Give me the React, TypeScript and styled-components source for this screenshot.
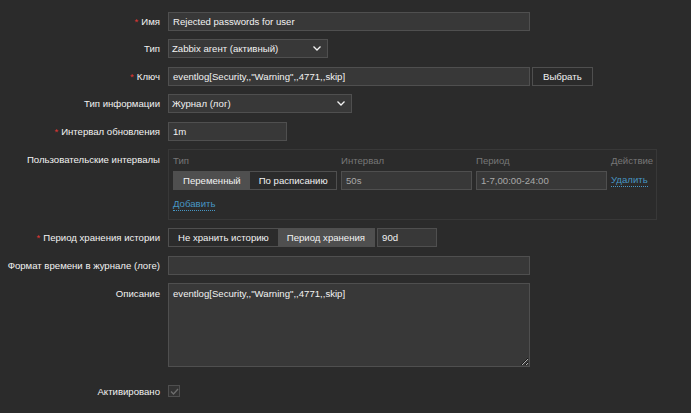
import React from "react"
import styled, { createGlobalStyle } from "styled-components"

const GlobalStyle = createGlobalStyle`
  html, body {
    margin: 0;
    background: #2b2b2b;
  }
  body {
    font-family: "Liberation Sans", Arial, sans-serif;
    font-size: 9.6px;
    color: #f2f2f2;
  }
`

const Form = styled.div`
  display: grid;
  grid-template-columns: 160px 1fr;
  align-content: start;
  column-gap: 8px;
  row-gap: 8.4px;
  padding-top: 12px;
  width: 691px;
  height: 413px;
  box-sizing: border-box;
`

const Label = styled.div<{ $top?: boolean; $mt?: number }>`
  text-align: right;
  line-height: 19px;
  white-space: nowrap;
  align-self: ${(p) => (p.$top ? "start" : "center")};
  padding-top: ${(p) => (p.$top ? "1px" : "0")};
  margin-top: ${(p) => p.$mt || 0}px;
`

const Req = styled.span`
  color: #e33734;
  margin-right: 3px;
`

const Field = styled.div<{ $mt?: number }>`
  display: flex;
  align-items: center;
  gap: 2px;
  min-height: 19px;
  margin-top: ${(p) => p.$mt || 0}px;
`

const Input = styled.div<{ $w: number; $dim?: boolean }>`
  width: ${(p) => p.$w}px;
  height: 19px;
  box-sizing: border-box;
  background: #383838;
  border: 1px solid #4f4f4f;
  padding: 0 4px;
  line-height: 17px;
  color: ${(p) => (p.$dim ? "#a8a8a8" : "#f2f2f2")};
  white-space: nowrap;
  overflow: hidden;
`

const Select = styled(Input)`
  display: flex;
  justify-content: space-between;
  align-items: center;
  padding: 0 6px 0 3px;
`

const Button = styled.div`
  height: 19px;
  box-sizing: border-box;
  border: 1px solid #4f4f4f;
  background: #2b2b2b;
  padding: 0 10px;
  line-height: 17px;
`

const Segmented = styled.div`
  display: flex;
  height: 19px;
  box-sizing: border-box;
  border: 1px solid #4f4f4f;
  background: #2b2b2b;
`

const Segment = styled.div<{ $on?: boolean }>`
  padding: 0 9px;
  line-height: 17px;
  white-space: nowrap;
  background: ${(p) => (p.$on ? "#4f4f4f" : "transparent")};
`

const Box = styled.div`
  width: 489px;
  height: 71px;
  box-sizing: border-box;
  border: 1px solid #383838;
  padding: 3px 4px 0 4px;
`

const IntervalGrid = styled.div`
  display: grid;
  grid-template-columns: 164px 131px 131px auto;
  column-gap: 4px;
  row-gap: 3px;
  align-items: center;
`

const Head = styled.div`
  color: #777777;
  line-height: 15px;
`

const Link = styled.span`
  color: #4796c4;
  border-bottom: 1px dotted #4796c4;
  line-height: 12px;
  display: inline-block;
`

const AddRow = styled.div`
  margin-top: 8px;
`

const TextArea = styled.textarea`
  width: 362px;
  height: 84px;
  box-sizing: border-box;
  background: #383838;
  border: 1px solid #4f4f4f;
  color: #f2f2f2;
  font-family: "Liberation Sans", Arial, sans-serif;
  font-size: 9.6px;
  padding: 3px 4px;
  line-height: 13px;
  resize: vertical;
  outline: none;
  margin: 0;
  display: block;
`

const Check = styled.div`
  width: 12px;
  height: 12px;
  box-sizing: border-box;
  border: 1px solid #4f4f4f;
  background: #333333;
  display: flex;
  align-items: center;
  justify-content: center;
`

const Chevron = () => (
  <svg width="8" height="5" viewBox="0 0 8 5">
    <path d="M0.5 0.5 L4 4 L7.5 0.5" stroke="#f2f2f2" strokeWidth="1.3" fill="none" />
  </svg>
)

export default function App() {
  return (
    <>
      <GlobalStyle />
      <Form>
        <Label><Req>*</Req>Имя</Label>
        <Field><Input $w={362}>Rejected passwords for user</Input></Field>

        <Label>Тип</Label>
        <Field><Select $w={160}>Zabbix агент (активный)<Chevron /></Select></Field>

        <Label><Req>*</Req>Ключ</Label>
        <Field>
          <Input $w={362}>eventlog[Security,,"Warning",,4771,,skip]</Input>
          <Button>Выбрать</Button>
        </Field>

        <Label>Тип информации</Label>
        <Field><Select $w={184}>Журнал (лог)<Chevron /></Select></Field>

        <Label><Req>*</Req>Интервал обновления</Label>
        <Field><Input $w={119}>1m</Input></Field>

        <Label $top>Пользовательские интервалы</Label>
        <Box>
          <IntervalGrid>
            <Head>Тип</Head>
            <Head>Интервал</Head>
            <Head>Период</Head>
            <Head>Действие</Head>
            <Segmented>
              <Segment $on>Переменный</Segment>
              <Segment>По расписанию</Segment>
            </Segmented>
            <Input $w={131} $dim>50s</Input>
            <Input $w={131} $dim>1-7,00:00-24:00</Input>
            <div><Link>Удалить</Link></div>
          </IntervalGrid>
          <AddRow><Link>Добавить</Link></AddRow>
        </Box>

        <Label><Req>*</Req>Период хранения истории</Label>
        <Field>
          <Segmented>
            <Segment>Не хранить историю</Segment>
            <Segment $on>Период хранения</Segment>
          </Segmented>
          <Input $w={60}>90d</Input>
        </Field>

        <Label>Формат времени в журнале (логе)</Label>
        <Field><Input $w={362}></Input></Field>

        <Label $top>Описание</Label>
        <Field>
          <TextArea defaultValue={'eventlog[Security,,"Warning",,4771,,skip]'} />
        </Field>

        <Label $mt={6}>Активировано</Label>
        <Field $mt={6}>
          <Check>
            <svg width="9" height="7" viewBox="0 0 9 7">
              <path d="M1 3.5 L3.5 6 L8 1" stroke="#6e6e6e" strokeWidth="1.3" fill="none" />
            </svg>
          </Check>
        </Field>
      </Form>
    </>
  )
}
